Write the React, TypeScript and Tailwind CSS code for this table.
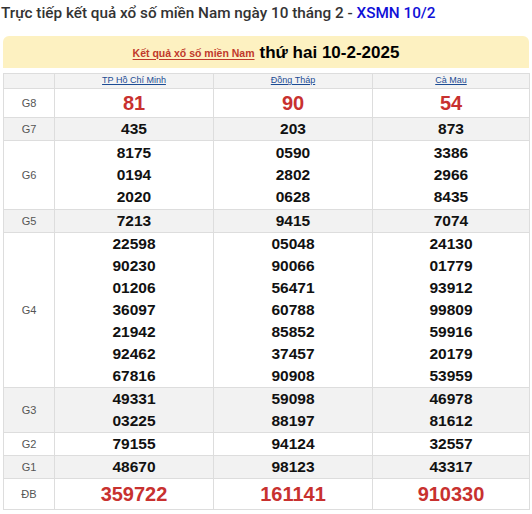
const cols = ['TP Hồ Chí Minh', 'Đồng Tháp', 'Cà Mau']

type Row = { label: string; values: string[][]; big?: boolean; gray?: boolean; pad?: string }

const rows: Row[] = [
  { label: 'G8', values: [['81'], ['90'], ['54']], big: true, pad: 'py-[3px]' },
  { label: 'G7', values: [['435'], ['203'], ['873']], gray: true },
  { label: 'G6', values: [['8175', '0194', '2020'], ['0590', '2802', '0628'], ['3386', '2966', '8435']], pad: 'py-[1px]' },
  { label: 'G5', values: [['7213'], ['9415'], ['7074']], gray: true },
  {
    label: 'G4',
    values: [
      ['22598', '90230', '01206', '36097', '21942', '92462', '67816'],
      ['05048', '90066', '56471', '60788', '85852', '37457', '90908'],
      ['24130', '01779', '93912', '99809', '59916', '20179', '53959'],
    ],
  },
  { label: 'G3', values: [['49331', '03225'], ['59098', '88197'], ['46978', '81612']], gray: true },
  { label: 'G2', values: [['79155'], ['94124'], ['32557']] },
  { label: 'G1', values: [['48670'], ['98123'], ['43317']], gray: true },
  { label: 'ĐB', values: [['359722'], ['161141'], ['910330']], big: true, pad: 'py-[4px]' },
]

export default function App() {
  return (
    <div className="w-[532px] h-[514px] bg-white overflow-hidden font-['Liberation_Sans',Arial,sans-serif]">
      <h1 className="pl-[1px] pt-[3px] h-[36px] text-[15.3px] leading-[20px] font-medium text-[#333] font-['Roboto',sans-serif]">
        Trực tiếp kết quả xổ số miền Nam ngày 10 tháng 2 - <span className="text-[#1010d8]">XSMN 10/2</span>
      </h1>

      <div className="mx-[3px] rounded-t-[6px] bg-[#fdf1c1] h-[32px] flex items-center justify-center gap-[5px] pt-[1px]">
        <a className="text-[10.5px] font-bold text-[#c0392b] underline underline-offset-2 mt-[2px]">Kết quả xổ số miền Nam</a>
        <span className="text-[17px] font-bold text-black">thứ hai 10-2-2025</span>
      </div>

      <div className="mx-[3px] mt-[5px] border-l border-[#ddd] grid grid-cols-[51px_159px_159px_157px]">
        <div className="h-[16px] bg-[#f3f3f3] border-r border-b border-t border-[#ddd]" />
        {cols.map(c => (
          <div key={c} className="h-[16px] bg-[#f3f3f3] border-r border-b border-t border-[#ddd] flex items-center justify-center">
            <a className="text-[9px] text-[#1c4c94] underline">{c}</a>
          </div>
        ))}

        {rows.map(r => {
          const bg = r.gray ? 'bg-[#f2f2f2]' : 'bg-white'
          return [
            <div key={r.label} className={`${bg} border-r border-b border-[#ddd] flex items-center justify-center text-[11px] text-[#555]`}>
              {r.label}
            </div>,
            ...r.values.map((vs, i) => (
              <div
                key={r.label + i}
                className={`${bg} border-r border-b border-[#ddd] flex flex-col items-center justify-center ${r.pad ?? ''}`}
              >
                {vs.map(v => (
                  <span
                    key={v}
                    className={
                      r.big
                        ? 'text-[20px] leading-[22px] font-bold text-[#c8312f]'
                        : 'text-[15.5px] leading-[22px] font-bold text-[#111]'
                    }
                  >
                    {v}
                  </span>
                ))}
              </div>
            )),
          ]
        })}
      </div>
    </div>
  )
}
